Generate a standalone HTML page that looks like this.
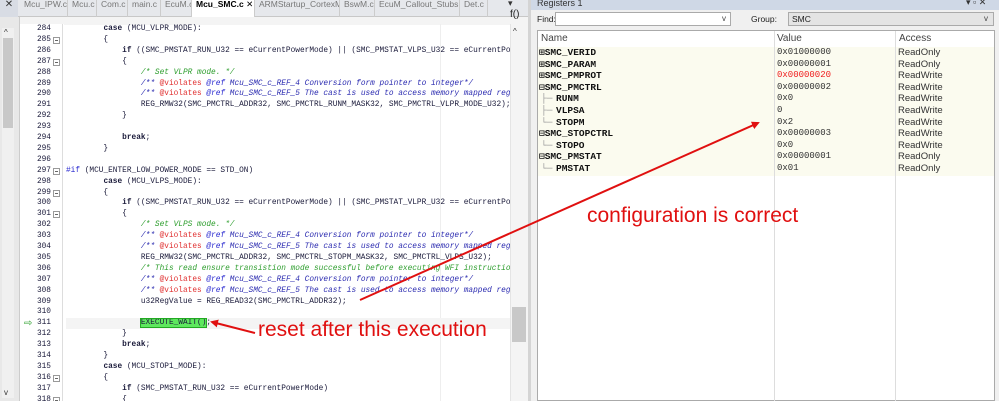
<!DOCTYPE html><html><head><style>
*{margin:0;padding:0;box-sizing:border-box}
body{width:999px;height:401px;overflow:hidden;background:#fff;position:relative;font-family:"Liberation Sans",sans-serif}
.abs{position:absolute}
.ln{position:absolute;left:20px;width:31px;text-align:right;font:7.8px "Liberation Mono",monospace;color:#1a1a3a;height:10.9px;line-height:10.9px}
.cl{position:absolute;left:66px;white-space:pre;font:7.8px "Liberation Mono",monospace;color:#1a1a3a;height:10.9px;line-height:10.9px}
.k{font-weight:bold}
.c{color:#2e9e2e;font-style:italic}
.d{color:#2b2bb0;font-style:italic}
.r{color:#e03030;font-style:normal}
.p{color:#2b2bd0}
.fold{position:absolute;left:53px;width:7px;height:7px;border:1px solid #999;background:#fff}
.fold:after{content:"";position:absolute;left:1px;top:2px;width:3px;height:1px;background:#666}
.tab{position:absolute;top:0;height:17px;font-size:8.5px;color:#777;border-right:1px solid #ccc;padding:0 0 0 4px;line-height:9px;white-space:nowrap;overflow:hidden}
.rg{position:absolute;font:bold 9.5px "Liberation Mono",monospace;color:#111;height:11.6px;line-height:11.6px}
.rv{position:absolute;left:777px;font:9px "Liberation Mono",monospace;color:#333;height:11.6px;line-height:11.6px}
.ra{position:absolute;left:898px;font-size:9.5px;color:#333;height:11.6px;line-height:11.6px}
</style></head><body>
<div class="abs" style="left:0;top:0;width:530px;height:17px;background:#e6e8ec;border-bottom:1px solid #c8c8c8"></div>
<div class="abs" style="left:0;top:0;width:18px;height:17px;background:#d8dce4;font-size:10px;text-align:center;color:#333;line-height:9px">✕</div>
<div class="tab" style="left:20px;width:48px">Mcu_IPW.c</div>
<div class="tab" style="left:68px;width:29px">Mcu.c</div>
<div class="tab" style="left:97px;width:31px">Com.c</div>
<div class="tab" style="left:128px;width:33px">main.c</div>
<div class="tab" style="left:161px;width:31px">EcuM.c</div>
<div class="tab" style="left:192px;width:63px;background:#fff;color:#000;font-weight:bold">Mcu_SMC.c <span style="font-weight:normal">✕</span></div>
<div class="tab" style="left:255px;width:85px">ARMStartup_CortexM.c</div>
<div class="tab" style="left:340px;width:35px">BswM.c</div>
<div class="tab" style="left:375px;width:85px">EcuM_Callout_Stubs.c</div>
<div class="tab" style="left:460px;width:28px">Det.c</div>
<div class="abs" style="left:508px;top:-2px;font-size:9px;color:#333">▾</div>
<div class="abs" style="left:0;top:17px;width:530px;height:8px;background:#f4f4f4"></div>
<div class="abs" style="left:510px;top:9px;font-size:10px;color:#222">f()</div>
<div class="abs" style="left:0;top:17px;width:20px;height:384px;background:#e8e8e8;border-right:1px solid #ccc"></div>
<div class="abs" style="left:2px;top:28px;width:12px;height:370px;background:#f0f0f0"></div>
<div class="abs" style="left:3px;top:38px;width:10px;height:90px;background:#c8c8c8"></div>
<div class="abs" style="left:4px;top:28px;font-size:8px;color:#333">^</div>
<div class="abs" style="left:4px;top:388px;font-size:8px;color:#333">v</div>
<div class="abs" style="left:20px;top:24px;width:44px;height:377px;background:#fff"></div>
<div class="abs" style="left:62px;top:24px;width:1px;height:377px;background:#ddd"></div>
<div class="abs" style="left:510px;top:24px;width:18px;height:377px;background:#f4f4f4;border-left:1px solid #e4e4e4"></div>
<div class="abs" style="left:512px;top:307px;width:14px;height:35px;background:#c8c8c8"></div>
<div class="abs" style="left:513px;top:27px;font-size:8px;color:#333">^</div>
<div class="abs" style="left:440px;top:24px;width:1px;height:377px;background:#eee"></div>
<div class="abs" style="left:528px;top:0;width:3px;height:401px;background:#d4d4d4"></div>
<div class="abs" style="left:66px;top:318px;width:444px;height:11px;background:#f4f4f4"></div>
<div class="abs" style="left:24px;top:318px;color:#2ca02c;font-size:10px;line-height:11px">⇨</div>
<div style="position:absolute;left:0;top:0;width:510px;height:401px;overflow:hidden">
<div class="ln" style="top:24px">284</div><div class="cl" style="top:24px">        <span class="k">case</span> (MCU_VLPR_MODE):</div>
<div class="ln" style="top:34.9px">285</div><div class="fold" style="top:36.9px"></div><div class="cl" style="top:34.9px">        {</div>
<div class="ln" style="top:45.8px">286</div><div class="cl" style="top:45.8px">            <span class="k">if</span> ((SMC_PMSTAT_RUN_U32 == eCurrentPowerMode) || (SMC_PMSTAT_VLPS_U32 == eCurrentPowerMode))</div>
<div class="ln" style="top:56.7px">287</div><div class="fold" style="top:58.7px"></div><div class="cl" style="top:56.7px">            {</div>
<div class="ln" style="top:67.6px">288</div><div class="cl" style="top:67.6px">                <span class="c">/* Set VLPR mode. */</span></div>
<div class="ln" style="top:78.5px">289</div><div class="cl" style="top:78.5px">                <span class="d">/** <span class="r">@violates</span> <span class="p">@ref</span> Mcu_SMC_c_REF_4 Conversion form pointer to integer*/</span></div>
<div class="ln" style="top:89.4px">290</div><div class="cl" style="top:89.4px">                <span class="d">/** <span class="r">@violates</span> <span class="p">@ref</span> Mcu_SMC_c_REF_5 The cast is used to access memory mapped registers*/</span></div>
<div class="ln" style="top:100.3px">291</div><div class="cl" style="top:100.3px">                REG_RMW32(SMC_PMCTRL_ADDR32, SMC_PMCTRL_RUNM_MASK32, SMC_PMCTRL_VLPR_MODE_U32);</div>
<div class="ln" style="top:111.2px">292</div><div class="cl" style="top:111.2px">            }</div>
<div class="ln" style="top:122.1px">293</div>
<div class="ln" style="top:133px">294</div><div class="cl" style="top:133px">            <span class="k">break</span>;</div>
<div class="ln" style="top:143.9px">295</div><div class="cl" style="top:143.9px">        }</div>
<div class="ln" style="top:154.8px">296</div>
<div class="ln" style="top:165.7px">297</div><div class="fold" style="top:167.7px"></div><div class="cl" style="top:165.7px"><span class="p">#if</span> (MCU_ENTER_LOW_POWER_MODE == STD_ON)</div>
<div class="ln" style="top:176.6px">298</div><div class="cl" style="top:176.6px">        <span class="k">case</span> (MCU_VLPS_MODE):</div>
<div class="ln" style="top:187.5px">299</div><div class="fold" style="top:189.5px"></div><div class="cl" style="top:187.5px">        {</div>
<div class="ln" style="top:198.4px">300</div><div class="cl" style="top:198.4px">            <span class="k">if</span> ((SMC_PMSTAT_RUN_U32 == eCurrentPowerMode) || (SMC_PMSTAT_VLPR_U32 == eCurrentPowerMode))</div>
<div class="ln" style="top:209.3px">301</div><div class="fold" style="top:211.3px"></div><div class="cl" style="top:209.3px">            {</div>
<div class="ln" style="top:220.2px">302</div><div class="cl" style="top:220.2px">                <span class="c">/* Set VLPS mode. */</span></div>
<div class="ln" style="top:231.1px">303</div><div class="cl" style="top:231.1px">                <span class="d">/** <span class="r">@violates</span> <span class="p">@ref</span> Mcu_SMC_c_REF_4 Conversion form pointer to integer*/</span></div>
<div class="ln" style="top:242px">304</div><div class="cl" style="top:242px">                <span class="d">/** <span class="r">@violates</span> <span class="p">@ref</span> Mcu_SMC_c_REF_5 The cast is used to access memory mapped registers*/</span></div>
<div class="ln" style="top:252.9px">305</div><div class="cl" style="top:252.9px">                REG_RMW32(SMC_PMCTRL_ADDR32, SMC_PMCTRL_STOPM_MASK32, SMC_PMCTRL_VLPS_U32);</div>
<div class="ln" style="top:263.8px">306</div><div class="cl" style="top:263.8px">                <span class="c">/* This read ensure transistion mode successful before executing WFI instruction */</span></div>
<div class="ln" style="top:274.7px">307</div><div class="cl" style="top:274.7px">                <span class="d">/** <span class="r">@violates</span> <span class="p">@ref</span> Mcu_SMC_c_REF_4 Conversion form pointer to integer*/</span></div>
<div class="ln" style="top:285.6px">308</div><div class="cl" style="top:285.6px">                <span class="d">/** <span class="r">@violates</span> <span class="p">@ref</span> Mcu_SMC_c_REF_5 The cast is used to access memory mapped registers*/</span></div>
<div class="ln" style="top:296.5px">309</div><div class="cl" style="top:296.5px">                u32RegValue = REG_READ32(SMC_PMCTRL_ADDR32);</div>
<div class="ln" style="top:307.4px">310</div>
<div class="ln" style="top:318.3px">311</div><div class="cl" style="top:318.3px">                <span style="background:#5ee85e;outline:1px solid #2a2">EXECUTE_WAIT()</span>;</div>
<div class="ln" style="top:329.2px">312</div><div class="cl" style="top:329.2px">            }</div>
<div class="ln" style="top:340.1px">313</div><div class="cl" style="top:340.1px">            <span class="k">break</span>;</div>
<div class="ln" style="top:351px">314</div><div class="cl" style="top:351px">        }</div>
<div class="ln" style="top:361.9px">315</div><div class="cl" style="top:361.9px">        <span class="k">case</span> (MCU_STOP1_MODE):</div>
<div class="ln" style="top:372.8px">316</div><div class="fold" style="top:374.8px"></div><div class="cl" style="top:372.8px">        {</div>
<div class="ln" style="top:383.7px">317</div><div class="cl" style="top:383.7px">            <span class="k">if</span> (SMC_PMSTAT_RUN_U32 == eCurrentPowerMode)</div>
<div class="ln" style="top:394.6px">318</div><div class="fold" style="top:396.6px"></div><div class="cl" style="top:394.6px">            {</div>
</div>
<div class="abs" style="left:531px;top:0;width:468px;height:401px;background:#f0f0f0"></div>
<div class="abs" style="left:531px;top:0;width:468px;height:10px;background:#cfd8e6"></div>
<div class="abs" style="left:537px;top:-2px;font-size:9px;color:#333">Registers 1</div>
<div class="abs" style="left:966px;top:-3px;font-size:9px;color:#333">▾ ▫ ✕</div>
<div class="abs" style="left:537px;top:14px;font-size:8.5px;color:#222">Find:</div>
<div class="abs" style="left:555px;top:12px;width:176px;height:14px;background:#fff;border:1px solid #aaa"></div>
<div class="abs" style="left:751px;top:14px;font-size:8.5px;color:#222">Group:</div>
<div class="abs" style="left:788px;top:12px;width:206px;height:14px;background:#e4e4e4;border:1px solid #aaa;font-size:8.5px;padding:1px 3px;color:#222">SMC</div>
<div class="abs" style="left:984px;top:14px;font-size:8px;color:#444">v</div>
<div class="abs" style="left:722px;top:14px;font-size:8px;color:#444">v</div>
<div class="abs" style="left:537px;top:30px;width:458px;height:371px;background:#fff;border:1px solid #aaa"></div>
<div class="abs" style="left:538px;top:47px;width:456px;height:129px;background:#fbfbef"></div>
<div class="abs" style="left:774px;top:31px;width:1px;height:370px;background:#ddd"></div>
<div class="abs" style="left:895px;top:31px;width:1px;height:370px;background:#ddd"></div>
<div class="abs" style="left:541px;top:33px;font-size:10px;color:#444">Name</div>
<div class="abs" style="left:777px;top:33px;font-size:10px;color:#444">Value</div>
<div class="abs" style="left:899px;top:33px;font-size:10px;color:#444">Access</div>
<div class="rg" style="left:539px;top:47px">⊞SMC_VERID</div><div class="rv" style="top:47px">0x01000000</div><div class="ra" style="top:47px">ReadOnly</div>
<div class="rg" style="left:539px;top:58.6px">⊞SMC_PARAM</div><div class="rv" style="top:58.6px">0x00000001</div><div class="ra" style="top:58.6px">ReadOnly</div>
<div class="rg" style="left:539px;top:70.2px">⊞SMC_PMPROT</div><div class="rv" style="top:70.2px;color:#f02020">0x00000020</div><div class="ra" style="top:70.2px">ReadWrite</div>
<div class="rg" style="left:539px;top:81.8px">⊟SMC_PMCTRL</div><div class="rv" style="top:81.8px">0x00000002</div><div class="ra" style="top:81.8px">ReadWrite</div>
<div class="rg" style="left:541px;top:93.4px;color:#999;font-weight:normal">├─</div><div class="rg" style="left:556px;top:93.4px">RUNM</div><div class="rv" style="top:93.4px">0x0</div><div class="ra" style="top:93.4px">ReadWrite</div>
<div class="rg" style="left:541px;top:105px;color:#999;font-weight:normal">├─</div><div class="rg" style="left:556px;top:105px">VLPSA</div><div class="rv" style="top:105px">0</div><div class="ra" style="top:105px">ReadWrite</div>
<div class="rg" style="left:541px;top:116.6px;color:#999;font-weight:normal">└─</div><div class="rg" style="left:556px;top:116.6px">STOPM</div><div class="rv" style="top:116.6px">0x2</div><div class="ra" style="top:116.6px">ReadWrite</div>
<div class="rg" style="left:539px;top:128.2px">⊟SMC_STOPCTRL</div><div class="rv" style="top:128.2px">0x00000003</div><div class="ra" style="top:128.2px">ReadWrite</div>
<div class="rg" style="left:541px;top:139.8px;color:#999;font-weight:normal">└─</div><div class="rg" style="left:556px;top:139.8px">STOPO</div><div class="rv" style="top:139.8px">0x0</div><div class="ra" style="top:139.8px">ReadWrite</div>
<div class="rg" style="left:539px;top:151.4px">⊟SMC_PMSTAT</div><div class="rv" style="top:151.4px">0x00000001</div><div class="ra" style="top:151.4px">ReadOnly</div>
<div class="rg" style="left:541px;top:163px;color:#999;font-weight:normal">└─</div><div class="rg" style="left:556px;top:163px">PMSTAT</div><div class="rv" style="top:163px">0x01</div><div class="ra" style="top:163px">ReadOnly</div>
<div class="abs" style="left:587px;top:204px;font-size:21px;color:#e01010;white-space:nowrap">configuration is correct</div>
<div class="abs" style="left:258px;top:318px;font-size:21px;color:#e01010;white-space:nowrap">reset after this execution</div>
<svg class="abs" style="left:0;top:0" width="999" height="401">
<defs><marker id="a" markerWidth="8" markerHeight="8" refX="6" refY="4" orient="auto" markerUnits="userSpaceOnUse"><path d="M0,0 L8,4 L0,8 z" fill="#e01010"/></marker></defs>
<line x1="360" y1="300" x2="758" y2="123" stroke="#e01010" stroke-width="2" marker-end="url(#a)"/>
<line x1="255" y1="333" x2="212" y2="322" stroke="#e01010" stroke-width="2" marker-end="url(#a)"/>
</svg>
</body></html>
